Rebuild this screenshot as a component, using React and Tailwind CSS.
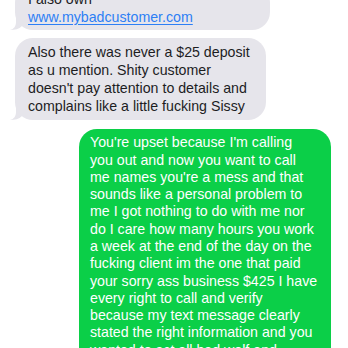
const grayLines2 = [
  "Also there was never a $25 deposit",
  "as u mention. Shity customer",
  "doesn't pay attention to details and",
  "complains like a little fucking Sissy",
];

const greenLines = [
  "You're upset because I'm calling",
  "you out and now you want to call",
  "me names you're a mess and that",
  "sounds like a personal problem to",
  "me I got nothing to do with me nor",
  "do I care how many hours you work",
  "a week at the end of the day on the",
  "fucking client im the one that paid",
  "your sorry ass business $425 I have",
  "every right to call and verify",
  "because my text message clearly",
  "stated the right information and you",
  "wanted to act all bad wolf and",
];

function Tail() {
  return (
    <svg className="absolute bottom-0 left-[-5px]" width="18" height="16" viewBox="0 0 18 16">
      <path d="M6 0 v8 c0 4 -2 7 -6 8 c5 0 9 -1 12 -4 h6 V0 z" fill="#e6e5eb" />
    </svg>
  );
}

function Lines({ lines }) {
  return lines.map((line, i) => (
    <span key={i} className="block whitespace-nowrap">
      {line}
    </span>
  ));
}

export default function App() {
  return (
    <div className="h-[348px] w-[348px] overflow-hidden bg-white font-['Liberation_Sans',Arial,sans-serif] text-[14.2px] leading-[17.7px]">
      <div className="flex flex-col gap-2 pl-[15px] pr-[17px]">
        <div className="relative mt-[-15px] w-[255px] rounded-[18px] bg-[#e6e5eb] pl-[13px] pr-3 pt-[6px] pb-[4px] text-[#1d1d1f]">
          <Tail />
          <span className="relative block">I also own</span>
          <span className="relative block text-[#2d7ff5] underline decoration-1 underline-offset-2">
            www.mybadcustomer.com
          </span>
        </div>

        <div className="relative w-[251px] rounded-[18px] bg-[#e6e5eb] pl-[13px] pr-3 pt-[6px] pb-[5px] text-[#1d1d1f]">
          <Tail />
          <div className="relative">
            <Lines lines={grayLines2} />
          </div>
        </div>

        <div className="mt-[1px] w-[252px] self-end rounded-[18px] bg-[#0bcf48] pl-[11px] pr-3 pt-[5px] pb-3 leading-[17.3px] text-white">
          <Lines lines={greenLines} />
        </div>
      </div>
    </div>
  );
}
